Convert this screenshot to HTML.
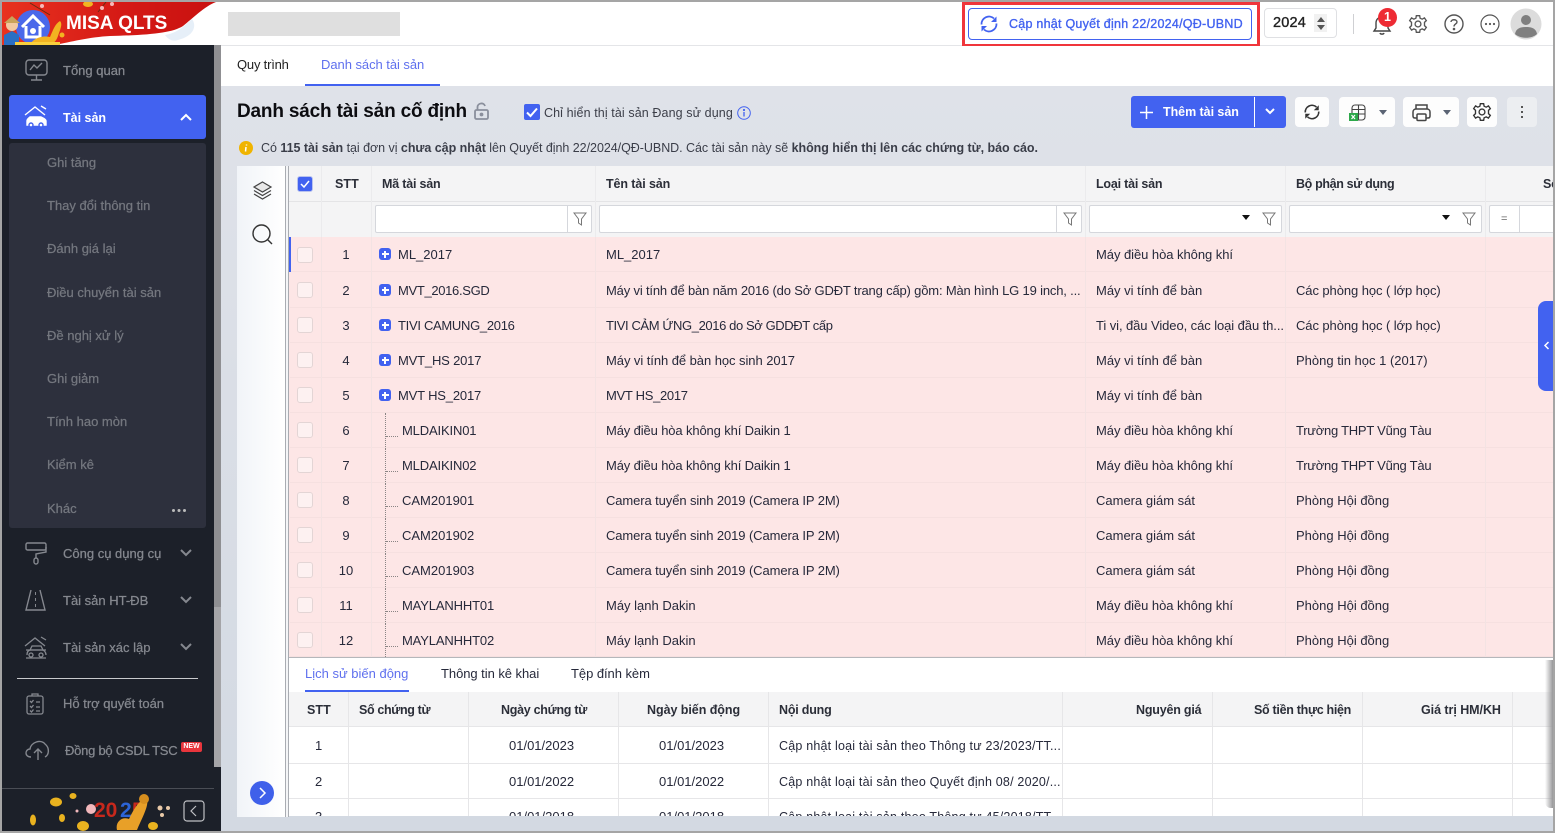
<!DOCTYPE html>
<html lang="vi"><head><meta charset="utf-8"><title>MISA QLTS</title>
<style>
*{box-sizing:border-box}
html,body{margin:0;padding:0;width:1555px;height:833px;overflow:hidden;background:#dfe2e9;font-family:"Liberation Sans","Noto Sans CJK SC",sans-serif;font-size:13px;color:#26293a}
.a{position:absolute}
.t{position:absolute;white-space:nowrap;line-height:16px}
.m{-webkit-text-stroke:.35px currentColor}
svg{position:absolute;overflow:visible}
.nav{position:absolute;left:63px;color:#85888f;font-size:13px;line-height:16px;white-space:nowrap;-webkit-text-stroke:.25px #85888f}
.sub{position:absolute;left:47px;color:#74777f;font-size:13px;line-height:16px;white-space:nowrap;-webkit-text-stroke:.25px #74777f}
.row{position:absolute;left:290px;width:1263px;height:35px;background:#fde6e6;border-bottom:1px solid #f6e0e0}
.row span{position:absolute;top:10px;line-height:16px;white-space:nowrap}
.cb{position:absolute;left:7px;top:9px;width:16px;height:16px;background:#fdf1f1;border:1px solid #e3d5d5;border-radius:3px}
.n{left:31px;width:50px;text-align:center}
.c1{left:108px;letter-spacing:-.25px}.c1b{left:112px;letter-spacing:-.15px}.c2{left:316px}.c3{left:806px}.c4{left:1006px}
.plus{position:absolute;left:89px;top:11px;width:12px;height:12px;background:#4262f0;border-radius:3px}
.plus:before{content:"";position:absolute;left:2.5px;top:5px;width:7px;height:2px;background:#fff}
.plus:after{content:"";position:absolute;left:5px;top:2.5px;width:2px;height:7px;background:#fff}
.tree{position:absolute;left:95px;top:0;height:34px;width:12px;border-left:1px dotted #8a8585}
.tree:after{content:"";position:absolute;left:0;top:23px;width:12px;border-top:1px dotted #8a8585}
.vl{position:absolute;width:1px;background:#f3e3e3}
.th{position:absolute;top:176px;font-weight:bold;font-size:12.5px;line-height:16px;white-space:nowrap;color:#2b2e38;letter-spacing:-.2px}
.inp{position:absolute;top:205px;height:28px;background:#fff;border:1px solid #d5d7dc;border-radius:2px}
.btn{position:absolute;top:97px;height:30px;background:#fdfdfd;border-radius:4px}
</style></head><body>

<!-- content background -->
<div class="a" style="left:221px;top:86px;width:1334px;height:747px;background:linear-gradient(#dfe2e9,#d3d9e2)"></div>

<!-- header -->
<div class="a" style="left:0;top:0;width:1555px;height:46px;background:#fff;border-bottom:1px solid #e4e5e8"></div>
<svg style="left:0;top:0" width="225" height="46" viewBox="0 0 225 46">
<defs><linearGradient id="rg" x1="0" x2="1"><stop offset="0" stop-color="#e8321f"/><stop offset=".55" stop-color="#d51a16"/><stop offset="1" stop-color="#c9110f"/></linearGradient></defs>
<path d="M2 2H216C205 6 193 18 183 26C172 33 150 35 110 36C90 37 70 42 55 45H2Z" fill="url(#rg)"/>
<path d="M165 35C178 33 185 25 192 19C197 26 194 36 178 40C172 42 168 39 165 35Z" fill="#e6eff8"/>
<circle cx="33" cy="27" r="17" fill="#4a68ea"/>
<path d="M22 27L33 16L44 27M26 26V37H40V26" fill="none" stroke="#fff" stroke-width="3"/>
<circle cx="33" cy="31" r="3" fill="#fff"/>
<circle cx="12" cy="25" r="6" fill="#f2c9a0"/><path d="M4 23L12 16L20 23Z" fill="#c9a35a"/>
<path d="M4 45V35L12 31L19 35V45Z" fill="#2b6fc4"/>
<path d="M30 45C32 39 42 35 50 37C53 30 55 24 60 21C63 24 60 30 58 36C56 42 52 45 48 45Z" fill="#f2b321"/>
<path d="M15 42H60V45H15Z" fill="#f9cf3c"/>
<ellipse cx="88" cy="4" rx="5" ry="3" fill="#f2b321"/>
<path d="M106 2L98 12M30 3L50 15" stroke="#6a2a10" stroke-width="1" fill="none"/>
<circle cx="42" cy="6" r="2" fill="#f7b8b8"/><circle cx="102" cy="8" r="2" fill="#f7b8b8"/><circle cx="112" cy="4" r="2" fill="#f7b8b8"/><circle cx="62" cy="35" r="2.5" fill="#f2b321"/>
</svg>
<div class="t" style="left:66px;top:13px;font-size:19px;line-height:22px;font-weight:bold;color:#fff">MISA QLTS</div>
<div class="a" style="left:228px;top:12px;width:172px;height:24px;background:#dfdfdf"></div>

<!-- update button -->
<div class="a" style="left:962px;top:2px;width:298px;height:45px;border:3px solid #f0353b"></div>
<div class="a" style="left:968px;top:8px;width:284px;height:32px;border:1px solid #4262f0;border-radius:4px;background:#fff"></div>
<svg style="left:979px;top:14px" width="20" height="20" viewBox="0 0 20 20" fill="none" stroke="#4262f0" stroke-width="1.800"><path d="M2.500 10.500A7.500 7.500 0 0 1 15 4.500M17.500 9.500A7.500 7.500 0 0 1 5 15.500"/><path d="M17.500 2.500V8H12ZM2.500 17.500V12H8Z" fill="#4262f0" stroke="none"/></svg>
<div class="t m" style="left:1009px;top:16px;color:#4262f0;font-size:12.5px;letter-spacing:.25px">Cập nhật Quyết định 22/2024/QĐ-UBND</div>

<!-- year -->
<div class="a" style="left:1264px;top:8px;width:73px;height:30px;border:1px solid #dfe0e3;border-radius:4px;background:#fff"></div>
<div class="t m" style="left:1273px;top:14px;font-size:14.500px;color:#222;line-height:18px;letter-spacing:.2px">2024</div>
<div class="a" style="left:1314px;top:14px;width:13px;height:18px;background:#f1f1f1"></div>
<div class="a" style="left:1317px;top:17px;border:4px solid transparent;border-top:0;border-bottom:5px solid #555"></div>
<div class="a" style="left:1317px;top:25px;border:4px solid transparent;border-bottom:0;border-top:5px solid #555"></div>
<div class="a" style="left:1353px;top:14px;width:1px;height:20px;background:#cfd0d3"></div>

<svg style="left:1372px;top:14px" width="20" height="22" viewBox="0 0 20 22" fill="none" stroke="#444" stroke-width="1.400"><path d="M2 17H18L16 14V9C16 5 13 3 10 3C7 3 4 5 4 9V14Z"/><path d="M8 19C8.500 20.500 11.500 20.500 12 19"/></svg>
<div class="a" style="left:1378px;top:8px;width:19px;height:19px;border-radius:50%;background:#ee2b34;color:#fff;font-size:12.500px;font-weight:bold;text-align:center;line-height:19px">1</div>
<svg style="left:1408px;top:14px" width="20" height="20" viewBox="0 0 24 24" fill="none" stroke="#555" stroke-width="1.600"><circle cx="12" cy="12" r="3.500"/><path d="M10 2H14L14.500 5L17 6.200L19.700 4.700L22 8L19.800 10L19.800 14L22 16L19.700 19.300L17 17.800L14.500 19L14 22H10L9.500 19L7 17.800L4.300 19.300L2 16L4.200 14L4.200 10L2 8L4.300 4.700L7 6.200L9.500 5Z"/></svg>
<svg style="left:1444px;top:14px" width="20" height="20" viewBox="0 0 20 20" fill="none" stroke="#555" stroke-width="1.400"><circle cx="10" cy="10" r="9"/><path d="M7 8C7 5 13 5 13 8C13 10 10 10 10 12.500"/><circle cx="10" cy="15" r=".6" fill="#555"/></svg>
<svg style="left:1480px;top:14px" width="20" height="20" viewBox="0 0 20 20" fill="none" stroke="#555" stroke-width="1.200"><circle cx="10" cy="10" r="9"/><circle cx="6" cy="10" r=".5"/><circle cx="10" cy="10" r=".5"/><circle cx="14" cy="10" r=".5"/></svg>
<svg style="left:1510px;top:8px" width="32" height="32" viewBox="0 0 32 32"><circle cx="16" cy="16" r="15.500" fill="#dcdcdc"/><circle cx="16" cy="12" r="5" fill="#7f7f7f"/><path d="M5 26C6 20 11 19 16 19C21 19 26 20 27 26C22 31 10 31 5 26Z" fill="#7f7f7f"/></svg>

<!-- sidebar -->
<div class="a" style="left:0;top:45px;width:214px;height:788px;background:#1c2029"></div>
<div class="a" style="left:214px;top:45px;width:7px;height:788px;background:#8f8f92"></div>
<div class="a" style="left:214px;top:607px;width:7px;height:160px;background:#a5a5a8"></div>
<div class="a" style="left:214px;top:767px;width:7px;height:66px;background:#1c2029"></div>

<svg style="left:25px;top:59px" width="23" height="22" viewBox="0 0 23 22" fill="none" stroke="#85888f" stroke-width="1.400"><rect x="1" y="1" width="21" height="15" rx="3"/><path d="M5 11L9 6L12 9L17 4" /><path d="M11.500 16V21M6 21H17"/></svg>
<div class="nav" style="top:63px">Tổng quan</div>

<div class="a" style="left:9px;top:95px;width:197px;height:44px;background:#4262f0;border-radius:3px"></div>
<svg style="left:24px;top:105px" width="24" height="24" viewBox="0 0 24 24" fill="none" stroke="#fff" stroke-width="1.400"><path d="M1 10L11 2L21 10M17 1L22 4"/><path d="M3 20V16C3 14 5 13 6 12H17C19 13 22 14 22 16V20Z" fill="#fff"/><circle cx="7" cy="20" r="2" fill="#fff" stroke="#4262f0"/><circle cx="17" cy="20" r="2" fill="#fff" stroke="#4262f0"/></svg>
<div class="t" style="left:63px;top:110px;color:#fff;font-weight:bold;font-size:12.500px">Tài sản</div>
<svg style="left:180px;top:113px" width="12" height="8" viewBox="0 0 12 8" fill="none" stroke="#fff" stroke-width="2"><path d="M1 7L6 2L11 7"/></svg>

<div class="a" style="left:9px;top:143px;width:197px;height:385px;background:#2d303d;border-radius:3px"></div>
<div class="sub" style="top:155px">Ghi tăng</div>
<div class="sub" style="top:198px">Thay đổi thông tin</div>
<div class="sub" style="top:241px">Đánh giá lại</div>
<div class="sub" style="top:285px">Điều chuyển tài sản</div>
<div class="sub" style="top:328px">Đề nghị xử lý</div>
<div class="sub" style="top:371px">Ghi giảm</div>
<div class="sub" style="top:414px">Tính hao mòn</div>
<div class="sub" style="top:457px">Kiểm kê</div>
<div class="sub" style="top:501px">Khác</div>
<div class="a" style="left:172px;top:509px;width:3px;height:3px;border-radius:50%;background:#bbb;box-shadow:5.500px 0 #bbb,11px 0 #bbb"></div>

<svg style="left:25px;top:542px" width="23" height="23" viewBox="0 0 23 23" fill="none" stroke="#85888f" stroke-width="1.400"><rect x="1" y="1" width="20" height="7" rx="1.500"/><path d="M21 5V10L11 12V16"/><rect x="9" y="16" width="4" height="6" rx="2"/></svg>
<div class="nav" style="top:546px">Công cụ dụng cụ</div>
<svg style="left:180px;top:549px" width="12" height="8" viewBox="0 0 12 8" fill="none" stroke="#85888f" stroke-width="2"><path d="M1 1L6 6L11 1"/></svg>

<svg style="left:25px;top:589px" width="22" height="22" viewBox="0 0 22 22" fill="none" stroke="#85888f" stroke-width="1.400"><path d="M6 1L1 21H20L15 1"/><path d="M10.500 3V6M10.500 9V12M10.500 15V18" stroke-width="1"/></svg>
<div class="nav" style="top:593px">Tài sản HT-ĐB</div>
<svg style="left:180px;top:596px" width="12" height="8" viewBox="0 0 12 8" fill="none" stroke="#85888f" stroke-width="2"><path d="M1 1L6 6L11 1"/></svg>

<svg style="left:24px;top:636px" width="24" height="24" viewBox="0 0 24 24" fill="none" stroke="#85888f" stroke-width="1.300"><path d="M1 10L11 2L21 10M17 1L22 4"/><path d="M2 14H22M2 22H22M6 14L8 10H17L19 14"/><path d="M3 19C3 15 5 14 7 14H18C20 14 22 16 22 19"/><circle cx="7" cy="19" r="2"/><circle cx="17" cy="19" r="2"/></svg>
<div class="nav" style="top:640px">Tài sản xác lập</div>
<svg style="left:180px;top:643px" width="12" height="8" viewBox="0 0 12 8" fill="none" stroke="#85888f" stroke-width="2"><path d="M1 1L6 6L11 1"/></svg>

<div class="a" style="left:17px;top:678px;width:181px;height:1px;background:#c9cacd"></div>

<svg style="left:26px;top:693px" width="18" height="22" viewBox="0 0 18 22" fill="none" stroke="#85888f" stroke-width="1.300"><rect x="1" y="3" width="16" height="18" rx="2"/><path d="M6 3V1H12V3"/><path d="M4 8L5.500 9.500L7.500 7M4 13L5.500 14.500L7.500 12M4 17.500L5.500 19L7.500 16.500M10 9H14M10 14H14M10 18H14"/></svg>
<div class="nav" style="top:696px">Hỗ trợ quyết toán</div>

<svg style="left:25px;top:739px" width="25" height="22" viewBox="0 0 25 22" fill="none" stroke="#85888f" stroke-width="1.400"><path d="M6 18C-1 18 0 10 5 10C6 3 16 0 20 5C25 9 24 16 20 18"/><path d="M13 21V10M9 14L13 10L17 14"/></svg>
<div class="nav" style="left:65px;top:743px;letter-spacing:-.25px">Đồng bộ CSDL TSC</div>
<div class="a" style="left:181px;top:742px;width:21px;height:10px;background:#e8353c;border-radius:2px;color:#fff;font-size:7px;font-weight:bold;text-align:center;line-height:10px">NEW</div>

<div class="a" style="left:2px;top:788px;width:212px;height:1px;background:#4a4d55"></div>
<svg style="left:25px;top:790px" width="150" height="41" viewBox="0 0 150 41">
<ellipse cx="31" cy="12" rx="6" ry="4.500" fill="#e9b21f"/><ellipse cx="48" cy="6" rx="3.500" ry="3" fill="#e9b21f"/><ellipse cx="8" cy="30" rx="3" ry="5.500" fill="#e9b21f"/><ellipse cx="37" cy="28" rx="3" ry="4" fill="#e9b21f"/><ellipse cx="58" cy="36" rx="6" ry="5" fill="#e9b21f"/>
<circle cx="66" cy="19" r="5" fill="#f2b8bc"/><circle cx="52" cy="21" r="1.500" fill="#f2b8bc"/><circle cx="135" cy="18" r="2.500" fill="#e8c9a8"/><circle cx="143" cy="18" r="2" fill="#e8c9a8"/><circle cx="137" cy="25" r="2" fill="#e8c9a8"/>
<text x="69" y="27" font-family="Liberation Sans" font-weight="bold" font-size="21" fill="#c7281c">20</text>
<text x="95" y="27" font-family="Liberation Sans" font-weight="bold" font-size="21" fill="#2c64d6">2</text>
<text x="107" y="27" font-family="Liberation Sans" font-weight="bold" font-size="21" fill="#c7281c">5</text>
<path d="M92 40C90 32 97 26 104 29C110 16 118 6 122 10C124 16 116 30 112 40Z" fill="#e8a028"/><circle cx="119" cy="9" r="5" fill="#d68e1e"/><ellipse cx="128" cy="36" rx="5" ry="4" fill="#e9b21f"/>
</svg>
<svg style="left:183px;top:800px" width="22" height="22" viewBox="0 0 22 22" fill="none" stroke="#bfc0c4" stroke-width="1.200"><rect x="1" y="1" width="20" height="20" rx="3"/><path d="M13 6L8 11L13 16"/></svg>

<!-- tabs -->
<div class="a" style="left:221px;top:46px;width:1334px;height:40px;background:#fff"></div>
<div class="t" style="left:237px;top:57px;color:#222;letter-spacing:-.2px">Quy trình</div>
<div class="t" style="left:321px;top:57px;color:#5f70ee;letter-spacing:-.05px">Danh sách tài sản</div>
<div class="a" style="left:305px;top:84px;width:135px;height:2px;background:#4262f0"></div>

<!-- title -->
<div class="t" style="left:237px;top:100px;font-size:19px;font-weight:bold;line-height:24px;color:#0c0c10;letter-spacing:-.18px">Danh sách tài sản cố định</div>
<svg style="left:474px;top:102px" width="15" height="18" viewBox="0 0 15 18" fill="none" stroke="#8a8f9c" stroke-width="1.800"><rect x="1" y="8" width="13" height="9" rx="1.500"/><path d="M3.500 8V5C3.500 1 10 0 11 4"/><circle cx="7.500" cy="12.500" r="1" fill="#8a8f9c"/></svg>
<div class="a" style="left:524px;top:104px;width:16px;height:16px;background:#4262f0;border-radius:2px"></div>
<svg style="left:524px;top:104px" width="16" height="16" viewBox="0 0 16 16" fill="none" stroke="#fff" stroke-width="2"><path d="M3 8.500L6.500 12L13 4.500"/></svg>
<div class="t" style="left:544px;top:105px;font-size:12.500px;color:#3b3e48;letter-spacing:.1px">Chỉ hiển thị tài sản Đang sử dụng</div>
<svg style="left:737px;top:106px" width="14" height="14" viewBox="0 0 14 14" fill="none" stroke="#4262f0" stroke-width="1"><circle cx="7" cy="7" r="6.300"/><path d="M7 6V10.500" stroke-width="1.300"/><circle cx="7" cy="4" r=".6" fill="#4262f0"/></svg>

<svg style="left:239px;top:141px" width="14" height="14" viewBox="0 0 14 14"><circle cx="7" cy="7" r="7" fill="#f0b400"/><path d="M7.500 3.500V4.500M7 6L6.500 10.500" stroke="#fff" stroke-width="1.500" fill="none"/></svg>
<div class="t" style="left:261px;top:140px;font-size:12.500px;color:#3a3d48;letter-spacing:-.04px">Có <b>115 tài sản</b> tại đơn vị <b>chưa cập nhật</b> lên Quyết định 22/2024/QĐ-UBND. Các tài sản này sẽ <b>không hiển thị lên các chứng từ, báo cáo.</b></div>

<!-- toolbar -->
<div class="a" style="left:1131px;top:96px;width:155px;height:32px;background:#4262f0;border-radius:3px"></div>
<div class="a" style="left:1254px;top:97px;width:1px;height:30px;background:#fff"></div>
<svg style="left:1139px;top:105px" width="15" height="15" viewBox="0 0 15 15" stroke="#fff" stroke-width="1.500"><path d="M7.500 1V14M1 7.500H14"/></svg>
<div class="t" style="left:1163px;top:104px;color:#fff;font-weight:bold;font-size:12.500px;letter-spacing:-.05px">Thêm tài sản</div>
<svg style="left:1265px;top:108px" width="10" height="7" viewBox="0 0 10 7" fill="none" stroke="#fff" stroke-width="2"><path d="M1 1L5 5L9 1"/></svg>

<div class="btn" style="left:1295px;width:34px"></div>
<svg style="left:1303px;top:103px" width="18" height="18" viewBox="0 0 20 20" fill="none" stroke="#333" stroke-width="1.800"><path d="M2.500 10.500A7.500 7.500 0 0 1 15 4.500M17.500 9.500A7.500 7.500 0 0 1 5 15.500"/><path d="M17.500 2.500V8H12ZM2.500 17.500V12H8Z" fill="#333" stroke="none"/></svg>
<div class="btn" style="left:1339px;width:56px"></div>
<svg style="left:1349px;top:104px" width="17" height="18" viewBox="0 0 17 18" fill="none" stroke="#444" stroke-width="1.100"><rect x="3" y="1" width="13" height="15" rx="3"/><path d="M3 5.500H16M3 10H16M9.500 1V16"/><rect x="0" y="9" width="9" height="8" fill="#2da84a" stroke="none"/><path d="M2.500 11L6 15M6 11L2.500 15" stroke="#fff" stroke-width="1.200"/></svg>
<div class="a" style="left:1379px;top:110px;border:4px solid transparent;border-bottom:0;border-top:5px solid #5b6474"></div>
<div class="btn" style="left:1403px;width:56px"></div>
<svg style="left:1412px;top:103px" width="19" height="19" viewBox="0 0 19 19" fill="none" stroke="#444" stroke-width="1.500"><path d="M4 6V2H15V6"/><path d="M5 15H3C1.500 15 1 14 1 13V9C1 7 2.500 6 4 6H15C16.500 6 18 7 18 9V13C18 14 17.500 15 16 15H14"/><rect x="5" y="11" width="9" height="6.500" rx="1"/></svg>
<div class="a" style="left:1443px;top:110px;border:4px solid transparent;border-bottom:0;border-top:5px solid #5b6474"></div>
<div class="btn" style="left:1467px;width:30px"></div>
<svg style="left:1472px;top:102px" width="20" height="20" viewBox="0 0 24 24" fill="none" stroke="#333" stroke-width="1.600"><circle cx="12" cy="12" r="3.500"/><path d="M10 2H14L14.500 5L17 6.200L19.700 4.700L22 8L19.800 10L19.800 14L22 16L19.700 19.300L17 17.800L14.500 19L14 22H10L9.500 19L7 17.800L4.300 19.300L2 16L4.200 14L4.200 10L2 8L4.300 4.700L7 6.200L9.500 5Z"/></svg>
<div class="btn" style="left:1507px;width:30px;background:#eceef1"></div>
<div class="a" style="left:1521px;top:106px;width:2px;height:2px;background:#555;box-shadow:0 5px #555,0 10px #555"></div>

<!-- left tool panel -->
<div class="a" style="left:237px;top:166px;width:48px;height:651px;background:linear-gradient(90deg,#f1f4f8,#fff)"></div>
<div class="a" style="left:285px;top:166px;width:1px;height:651px;background:#a9acb2"></div>
<div class="a" style="left:286px;top:166px;width:2px;height:651px;background:#f4f5f7"></div>
<div class="a" style="left:288px;top:166px;width:1px;height:651px;background:#a9acb2"></div>
<svg style="left:253px;top:181px" width="19" height="20" viewBox="0 0 19 20" fill="none" stroke="#444" stroke-width="1.200"><path d="M9.500 1L18 6L9.500 11L1 6Z" fill="#e8e8e8"/><path d="M1 9.500L9.500 14.500L18 9.500M1 13L9.500 18L18 13"/></svg>
<svg style="left:252px;top:224px" width="21" height="21" viewBox="0 0 21 21" fill="none" stroke="#333" stroke-width="1.400"><circle cx="9.500" cy="9.500" r="8.500"/><path d="M15.500 15.500L20 20"/></svg>
<svg style="left:250px;top:781px" width="24" height="24" viewBox="0 0 24 24"><circle cx="12" cy="12" r="12" fill="#3f60ea"/><path d="M10 7L15 12L10 17" fill="none" stroke="#fff" stroke-width="1.500"/></svg>

<!-- main table -->
<div class="a" style="left:289px;top:166px;width:1266px;height:71px;background:#f4f4f5"></div>
<div class="a" style="left:289px;top:201px;width:1266px;height:1px;background:#e4e4e6"></div>
<div class="a" style="left:321px;top:166px;width:1px;height:71px;background:#ebebed"></div>
<div class="a" style="left:371px;top:166px;width:1px;height:71px;background:#ebebed"></div>
<div class="a" style="left:595px;top:166px;width:1px;height:71px;background:#ebebed"></div>
<div class="a" style="left:1085px;top:166px;width:1px;height:71px;background:#ebebed"></div>
<div class="a" style="left:1285px;top:166px;width:1px;height:71px;background:#ebebed"></div>
<div class="a" style="left:1485px;top:166px;width:1px;height:71px;background:#ebebed"></div>

<div class="a" style="left:297px;top:176px;width:16px;height:16px;background:#4262f0;border:1px solid #b9c2ee;border-radius:3px"></div>
<svg style="left:297px;top:176px" width="16" height="16" viewBox="0 0 16 16" fill="none" stroke="#fff" stroke-width="1.500"><path d="M4 8L7 11L12 5"/></svg>
<div class="th" style="left:335px;letter-spacing:.1px">STT</div>
<div class="th" style="left:382px">Mã tài sản</div>
<div class="th" style="left:606px;letter-spacing:-.1px">Tên tài sản</div>
<div class="th" style="left:1096px">Loại tài sản</div>
<div class="th" style="left:1296px;letter-spacing:-.35px">Bộ phận sử dụng</div>
<div class="th" style="left:1543px">Số</div>

<div class="inp" style="left:375px;width:217px"></div>
<div class="a" style="left:567px;top:206px;width:1px;height:26px;background:#d5d7dc"></div>
<div class="inp" style="left:599px;width:483px"></div>
<div class="a" style="left:1056px;top:206px;width:1px;height:26px;background:#d5d7dc"></div>
<div class="inp" style="left:1089px;width:193px"></div>
<div class="inp" style="left:1289px;width:193px"></div>
<div class="inp" style="left:1489px;width:66px"></div>
<div class="a" style="left:1519px;top:206px;width:1px;height:26px;background:#d5d7dc"></div>
<div class="t" style="left:1501px;top:211px;font-size:11px;color:#666">=</div>
<svg style="left:573px;top:212px" width="14" height="14" viewBox="0 0 14 14" fill="none" stroke="#777" stroke-width="1"><path d="M1 1H13L8.500 7V13L5.500 11V7Z"/></svg>
<svg style="left:1063px;top:212px" width="14" height="14" viewBox="0 0 14 14" fill="none" stroke="#777" stroke-width="1"><path d="M1 1H13L8.500 7V13L5.500 11V7Z"/></svg>
<svg style="left:1262px;top:212px" width="14" height="14" viewBox="0 0 14 14" fill="none" stroke="#777" stroke-width="1"><path d="M1 1H13L8.500 7V13L5.500 11V7Z"/></svg>
<svg style="left:1462px;top:212px" width="14" height="14" viewBox="0 0 14 14" fill="none" stroke="#777" stroke-width="1"><path d="M1 1H13L8.500 7V13L5.500 11V7Z"/></svg>
<div class="a" style="left:1242px;top:215px;border:4px solid transparent;border-bottom:0;border-top:5px solid #111"></div>
<div class="a" style="left:1442px;top:215px;border:4px solid transparent;border-bottom:0;border-top:5px solid #111"></div>

<!-- rows -->
<div class="row" style="top:237px"><i class="cb" style="top:10px"></i><span class="n">1</span><i class="plus"></i><span class="c1" style="letter-spacing:0">ML_2017</span><span class="c2">ML_2017</span><span class="c3" style="letter-spacing:-.05px">Máy điều hòa không khí</span></div>
<div class="row" style="top:272px;height:36px"><i class="cb" style="top:10px"></i><span class="n" style="top:11px">2</span><i class="plus" style="top:12px"></i><span class="c1" style="top:11px;letter-spacing:-.33px">MVT_2016.SGD</span><span class="c2" style="top:11px;letter-spacing:-.17px">Máy vi tính để bàn năm 2016 (do Sở GDĐT trang cấp) gồm: Màn hình LG 19 inch, ...</span><span class="c3" style="top:11px">Máy vi tính để bàn</span><span class="c4" style="top:11px;letter-spacing:-.08px">Các phòng học ( lớp học)</span></div>
<div class="row" style="top:308px"><i class="cb"></i><span class="n">3</span><i class="plus"></i><span class="c1" style="letter-spacing:-.3px">TIVI CAMUNG_2016</span><span class="c2" style="letter-spacing:-.4px">TIVI CẢM ỨNG_2016 do Sở GDDĐT cấp</span><span class="c3" style="letter-spacing:-.08px">Ti vi, đầu Video, các loại đầu th...</span><span class="c4" style="letter-spacing:-.08px">Các phòng học ( lớp học)</span></div>
<div class="row" style="top:343px"><i class="cb"></i><span class="n">4</span><i class="plus"></i><span class="c1" style="letter-spacing:-.18px">MVT_HS 2017</span><span class="c2" style="letter-spacing:-.06px">Máy vi tính để bàn học sinh 2017</span><span class="c3">Máy vi tính để bàn</span><span class="c4">Phòng tin học 1 (2017)</span></div>
<div class="row" style="top:378px"><i class="cb"></i><span class="n">5</span><i class="plus"></i><span class="c1" style="letter-spacing:-.18px">MVT HS_2017</span><span class="c2" style="letter-spacing:-.3px">MVT HS_2017</span><span class="c3">Máy vi tính để bàn</span></div>
<div class="row" style="top:413px"><i class="cb"></i><span class="n">6</span><i class="tree"></i><span class="c1b">MLDAIKIN01</span><span class="c2" style="letter-spacing:-.13px">Máy điều hòa không khí Daikin 1</span><span class="c3" style="letter-spacing:-.05px">Máy điều hòa không khí</span><span class="c4" style="letter-spacing:-.25px">Trường THPT Vũng Tàu</span></div>
<div class="row" style="top:448px"><i class="cb"></i><span class="n">7</span><i class="tree"></i><span class="c1b">MLDAIKIN02</span><span class="c2" style="letter-spacing:-.13px">Máy điều hòa không khí Daikin 1</span><span class="c3" style="letter-spacing:-.05px">Máy điều hòa không khí</span><span class="c4" style="letter-spacing:-.25px">Trường THPT Vũng Tàu</span></div>
<div class="row" style="top:483px"><i class="cb"></i><span class="n">8</span><i class="tree"></i><span class="c1b" style="letter-spacing:0">CAM201901</span><span class="c2" style="letter-spacing:-.1px">Camera tuyển sinh 2019 (Camera IP 2M)</span><span class="c3">Camera giám sát</span><span class="c4">Phòng Hội đồng</span></div>
<div class="row" style="top:518px"><i class="cb"></i><span class="n">9</span><i class="tree"></i><span class="c1b" style="letter-spacing:0">CAM201902</span><span class="c2" style="letter-spacing:-.1px">Camera tuyển sinh 2019 (Camera IP 2M)</span><span class="c3">Camera giám sát</span><span class="c4">Phòng Hội đồng</span></div>
<div class="row" style="top:553px"><i class="cb"></i><span class="n">10</span><i class="tree"></i><span class="c1b" style="letter-spacing:0">CAM201903</span><span class="c2" style="letter-spacing:-.1px">Camera tuyển sinh 2019 (Camera IP 2M)</span><span class="c3">Camera giám sát</span><span class="c4">Phòng Hội đồng</span></div>
<div class="row" style="top:588px"><i class="cb"></i><span class="n">11</span><i class="tree"></i><span class="c1b">MAYLANHHT01</span><span class="c2">Máy lạnh Dakin</span><span class="c3" style="letter-spacing:-.05px">Máy điều hòa không khí</span><span class="c4">Phòng Hội đồng</span></div>
<div class="row" style="top:623px;height:34px"><i class="cb"></i><span class="n">12</span><i class="tree"></i><span class="c1b">MAYLANHHT02</span><span class="c2">Máy lạnh Dakin</span><span class="c3" style="letter-spacing:-.05px">Máy điều hòa không khí</span><span class="c4">Phòng Hội đồng</span></div>
<div class="a" style="left:289px;top:237px;width:1px;height:420px;background:#fde6e6"></div>
<div class="a" style="left:289px;top:237px;width:2px;height:35px;background:#4262f0"></div>
<div class="vl" style="left:321px;top:237px;height:420px"></div>
<div class="vl" style="left:371px;top:237px;height:420px"></div>
<div class="vl" style="left:595px;top:237px;height:420px"></div>
<div class="vl" style="left:1085px;top:237px;height:420px"></div>
<div class="vl" style="left:1285px;top:237px;height:420px"></div>
<div class="vl" style="left:1485px;top:237px;height:420px"></div>

<!-- side handle -->
<div class="a" style="left:1538px;top:301px;width:15px;height:90px;background:#4262f0;border-radius:8px 0 0 8px"></div>
<svg style="left:1543px;top:341px" width="7" height="9" viewBox="0 0 7 9" fill="none" stroke="#fff" stroke-width="1.500"><path d="M5.500 1L2 4.500L5.500 8"/></svg>

<!-- bottom panel -->
<div class="a" style="left:289px;top:657px;width:1264px;height:159px;background:#fff;border-top:1px solid #b5b7bb"></div>
<div class="t" style="left:305px;top:666px;color:#5f70ee;">Lịch sử biến động</div>
<div class="a" style="left:305px;top:690px;width:104px;height:2px;background:#4262f0"></div>
<div class="t" style="left:441px;top:666px;letter-spacing:-.05px">Thông tin kê khai</div>
<div class="t" style="left:571px;top:666px;letter-spacing:-.05px">Tệp đính kèm</div>

<div class="a" style="left:289px;top:692px;width:1264px;height:35px;background:#f4f4f5;border-bottom:1px solid #e6e6e8"></div>
<div class="a" style="left:289px;top:763px;width:1264px;height:1px;background:#e6e6e8"></div>
<div class="a" style="left:289px;top:798px;width:1264px;height:1px;background:#e6e6e8"></div>
<div class="a" style="left:348px;top:692px;width:1px;height:124px;background:#e6e6e8"></div>
<div class="a" style="left:468px;top:692px;width:1px;height:124px;background:#e6e6e8"></div>
<div class="a" style="left:618px;top:692px;width:1px;height:124px;background:#e6e6e8"></div>
<div class="a" style="left:768px;top:692px;width:1px;height:124px;background:#e6e6e8"></div>
<div class="a" style="left:1062px;top:692px;width:1px;height:124px;background:#e6e6e8"></div>
<div class="a" style="left:1212px;top:692px;width:1px;height:124px;background:#e6e6e8"></div>
<div class="a" style="left:1362px;top:692px;width:1px;height:124px;background:#e6e6e8"></div>
<div class="a" style="left:1512px;top:692px;width:1px;height:124px;background:#e6e6e8"></div>

<div class="th" style="top:702px;left:307px;letter-spacing:.1px">STT</div>
<div class="th" style="top:702px;left:359px;letter-spacing:-.35px">Số chứng từ</div>
<div class="th" style="top:702px;left:501px;letter-spacing:-.28px">Ngày chứng từ</div>
<div class="th" style="top:702px;left:647px;letter-spacing:-.05px">Ngày biến động</div>
<div class="th" style="top:702px;left:779px">Nội dung</div>
<div class="th" style="top:702px;left:1136px">Nguyên giá</div>
<div class="th" style="top:702px;left:1254px;letter-spacing:-.3px">Số tiền thực hiện</div>
<div class="th" style="top:702px;left:1421px;letter-spacing:-.05px">Giá trị HM/KH</div>

<div class="t" style="left:315px;top:738px">1</div>
<div class="t" style="left:509px;top:738px">01/01/2023</div>
<div class="t" style="left:659px;top:738px">01/01/2023</div>
<div class="t" style="left:779px;top:738px;font-size:12.500px;letter-spacing:.2px">Cập nhật loại tài sản theo Thông tư 23/2023/TT...</div>
<div class="t" style="left:315px;top:774px">2</div>
<div class="t" style="left:509px;top:774px">01/01/2022</div>
<div class="t" style="left:659px;top:774px">01/01/2022</div>
<div class="t" style="left:779px;top:774px;font-size:12.500px;letter-spacing:.2px">Cập nhật loại tài sản theo Quyết định 08/ 2020/...</div>
<div class="a" style="left:289px;top:799px;width:1249px;height:17px;overflow:hidden">
<div class="t" style="left:26px;top:10px">3</div>
<div class="t" style="left:220px;top:10px">01/01/2018</div>
<div class="t" style="left:370px;top:10px">01/01/2018</div>
<div class="t" style="left:490px;top:10px;font-size:12.500px;letter-spacing:.2px">Cập nhật loại tài sản theo Thông tư 45/2018/TT...</div>
</div>
<div class="a" style="left:1545px;top:660px;width:8px;height:148px;background:linear-gradient(90deg,rgba(150,150,152,0),#98989a);border-radius:0 0 0 6px"></div>

<!-- frame -->
<div class="a" style="left:0;top:0;width:1555px;height:2px;background:#a5a5a5"></div>
<div class="a" style="left:0;top:0;width:2px;height:833px;background:#a5a5a5"></div>
<div class="a" style="left:1553px;top:0;width:2px;height:833px;background:#a5a5a5"></div>
<div class="a" style="left:0;top:831px;width:1555px;height:2px;background:#a5a5a5"></div>
</body></html>
